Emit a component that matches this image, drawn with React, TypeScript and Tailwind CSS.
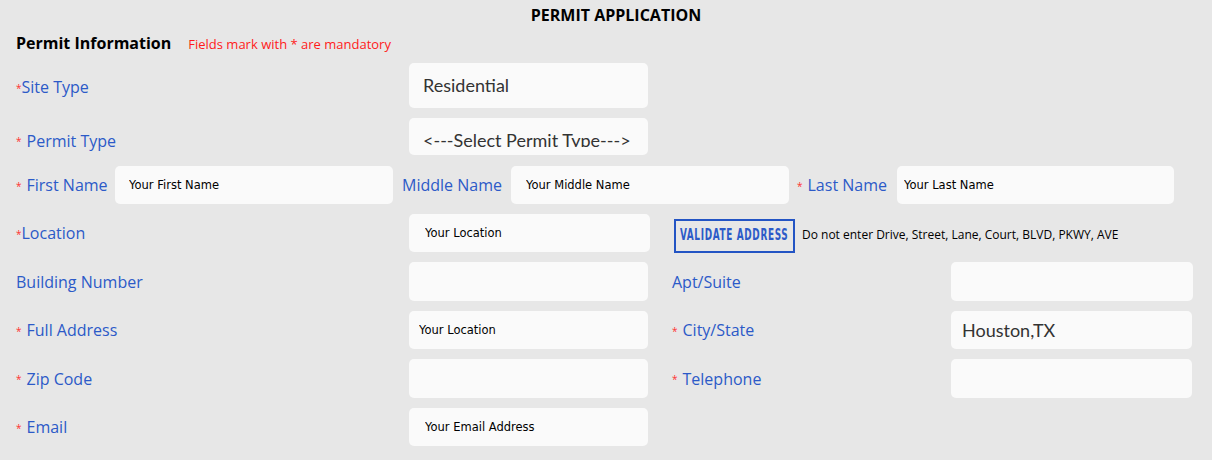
import React from 'react';

const blue = 'text-[#2c5ac8]';

function Star({ tight = false }: { tight?: boolean }) {
  return (
    <span className={`text-[10px] text-[#ff3030] relative top-[1px] ${tight ? 'mr-0' : 'mr-[5px]'}`}>*</span>
  );
}

function Label({ text, req = false, tight = false, className = '' }: { text: string; req?: boolean; tight?: boolean; className?: string }) {
  return (
    <div className={`flex items-center text-[16px] ${blue} ${className}`}>
      {req && <Star tight={tight} />}
      <span>{text}</span>
    </div>
  );
}

function Field({ placeholder = '', value, className = '', pad = 'pl-[14px]' }: { placeholder?: string; value?: string; className?: string; pad?: string }) {
  if (value) {
    return (
      <div className={`h-[38px] rounded-[5px] bg-[#fafafa] flex items-center ${pad} text-[18px] text-[#333] font-['Lato',sans-serif] ${className}`}>
        {value}
      </div>
    );
  }
  return (
    <input
      placeholder={placeholder}
      className={`h-[38px] rounded-[5px] bg-[#fafafa] ${pad} text-[11.5px] font-['DejaVu_Sans',sans-serif] text-black placeholder:text-black outline-none ${className}`}
    />
  );
}

export default function App() {
  return (
    <div className="w-[1212px] h-[460px] overflow-hidden bg-[#e7e7e7] font-['Open_Sans',sans-serif]">
      <h1 className="pt-[4px] pl-[20px] text-center text-[16px] font-bold text-black leading-[22px]">PERMIT APPLICATION</h1>

      <div className="flex items-baseline pl-[16px] mt-[5px] h-[22px]">
        <h2 className="text-[16px] font-bold text-black">Permit Information</h2>
        <span className="ml-[17px] text-[13px] text-[#ff1a1a]">Fields mark with * are mandatory</span>
      </div>

      <div className="flex flex-col gap-[10px] pl-[16px] mt-[10px]">
        {/* Site type */}
        <div className="flex items-center h-[45px]">
          <Label text="Site Type" req tight className="w-[393px] mt-[3px]" />
          <Field value="Residential" className="w-[239px] h-[45px]" />
        </div>

        {/* Permit type */}
        <div className="flex items-center h-[37px]">
          <Label text="Permit Type" req className="w-[393px] mt-[8px]" />
          <div className="w-[239px] h-[37px] rounded-[5px] bg-[#fafafa] pl-[14px] pt-[11px]">
            <div className="h-[18px] overflow-hidden text-[18px] leading-[22px] text-[#333] font-['Lato',sans-serif] whitespace-nowrap">
              &lt;---Select Permit Type---&gt;
            </div>
          </div>
        </div>

        {/* Names */}
        <div className="flex items-center h-[38px] mt-[1px]">
          <Label text="First Name" req className="w-[99px]" />
          <Field placeholder="Your First Name" className="w-[278px]" />
          <Label text="Middle Name" className="w-[109px] ml-[9px]" />
          <Field placeholder="Your Middle Name" className="w-[278px]" pad="pl-[15px]" />
          <Label text="Last Name" req className="w-[100px] ml-[8px]" />
          <Field placeholder="Your Last Name" className="w-[277px]" pad="pl-[7px]" />
        </div>

        {/* Location */}
        <div className="flex items-center h-[38px]">
          <Label text="Location" req tight className="w-[393px]" />
          <Field placeholder="Your Location" className="w-[241px]" pad="pl-[16px]" />
          <button className="ml-[24px] mt-[5px] h-[34px] w-[121px] border-2 border-[#2354c4] flex items-center justify-center overflow-hidden">
            <span className="inline-block whitespace-nowrap scale-x-[0.66] text-[#2c5ac8] font-['DejaVu_Sans_Condensed',sans-serif] font-bold text-[15px] tracking-[1px]">
              VALIDATE ADDRESS
            </span>
          </button>
          <span className="ml-[7px] mt-[4px] text-[12px] text-black">Do not enter Drive, Street, Lane, Court, BLVD, PKWY, AVE</span>
        </div>

        {/* Building */}
        <div className="flex items-center h-[39px]">
          <Label text="Building Number" className="w-[393px]" />
          <Field className="w-[239px] h-[39px]" />
          <Label text="Apt/Suite" className="w-[279px] ml-[24px]" />
          <Field className="w-[242px] h-[39px]" />
        </div>

        {/* Full address */}
        <div className="flex items-center h-[38px]">
          <Label text="Full Address" req className="w-[393px]" />
          <Field placeholder="Your Location" className="w-[239px]" pad="pl-[10px]" />
          <Label text="City/State" req className="w-[279px] ml-[24px]" />
          <Field value="Houston,TX" className="w-[241px]" pad="pl-[11px]" />
        </div>

        {/* Zip */}
        <div className="flex items-center h-[39px]">
          <Label text="Zip Code" req className="w-[393px]" />
          <Field className="w-[239px] h-[39px]" />
          <Label text="Telephone" req className="w-[279px] ml-[24px]" />
          <Field className="w-[241px] h-[39px]" />
        </div>

        {/* Email */}
        <div className="flex items-center h-[38px]">
          <Label text="Email" req className="w-[393px]" />
          <Field placeholder="Your Email Address" className="w-[239px]" pad="pl-[16px]" />
        </div>
      </div>
    </div>
  );
}
